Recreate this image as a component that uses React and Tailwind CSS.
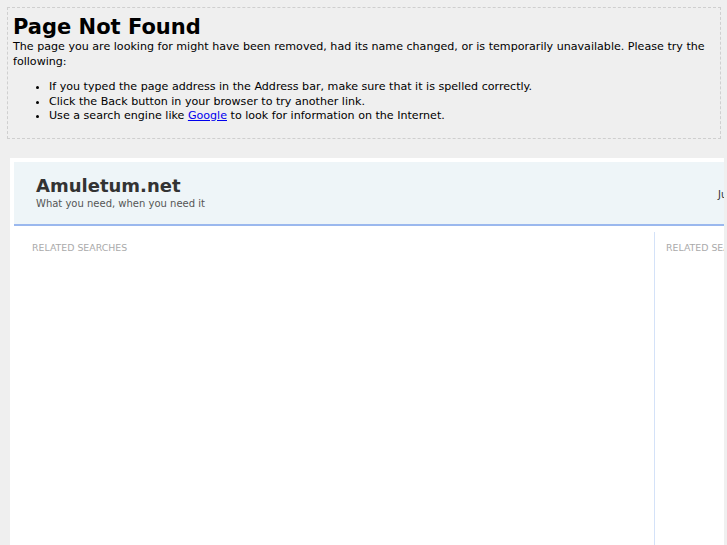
export default function App() {
  return (
    <div className="min-h-[545px] bg-[#efefef] pt-[7px] pb-0 font-['DejaVu_Sans',Verdana,sans-serif] text-black overflow-hidden">
      {/* 404 notice */}
      <div className="ml-[7px] mr-[6px] border border-dashed border-[#cfcfcf] px-[5px] pt-[7px] pb-[3px]">
        <h1 className="text-[21px] font-bold leading-[25px] m-0">Page Not Found</h1>
        <p className="text-[11.1px] leading-[14.5px]">
          The page you are looking for might have been removed, had its name changed, or is temporarily unavailable. Please try the following:
        </p>
        <ul className="list-disc pl-[36px] mt-[11px] mb-[11px] text-[11.1px] leading-[14.5px]">
          <li>If you typed the page address in the Address bar, make sure that it is spelled correctly.</li>
          <li>Click the Back button in your browser to try another link.</li>
          <li>
            Use a search engine like{' '}
            <a href="#" className="text-[#0000ee] underline">Google</a>{' '}
            to look for information on the Internet.
          </li>
        </ul>
      </div>

      {/* Parked page frame */}
      <div className="mt-[19px] ml-[10px] w-[714px] h-[400px] bg-white p-[4px] overflow-hidden">
        <div className="w-[960px]">
          {/* Header */}
          <div className="flex items-center h-[64px] bg-[#eef5f8] border-b-2 border-[#9ab8ee] pl-[22px]">
            <div className="w-[682px]">
              <div className="text-[18px] font-bold leading-[21px] text-[#333]">Amuletum.net</div>
              <div className="text-[10px] leading-[13px] text-[#555] mt-[1px]">What you need, when you need it</div>
            </div>
            <div className="text-[10px] text-[#333] pt-[3px]">June 2011</div>
          </div>

          {/* Columns */}
          <div className="flex mt-[6px]">
            <div className="w-[641px] h-[320px] border-r border-[#d4e2f8] pl-[18px] pt-[9px]">
              <div className="text-[9.4px] uppercase text-[#aaa]">Related Searches</div>
            </div>
            <div className="w-[300px] pl-[11px] pt-[9px]">
              <div className="text-[9.4px] uppercase text-[#aaa]">Related Searches</div>
            </div>
          </div>
        </div>
      </div>
    </div>
  );
}
